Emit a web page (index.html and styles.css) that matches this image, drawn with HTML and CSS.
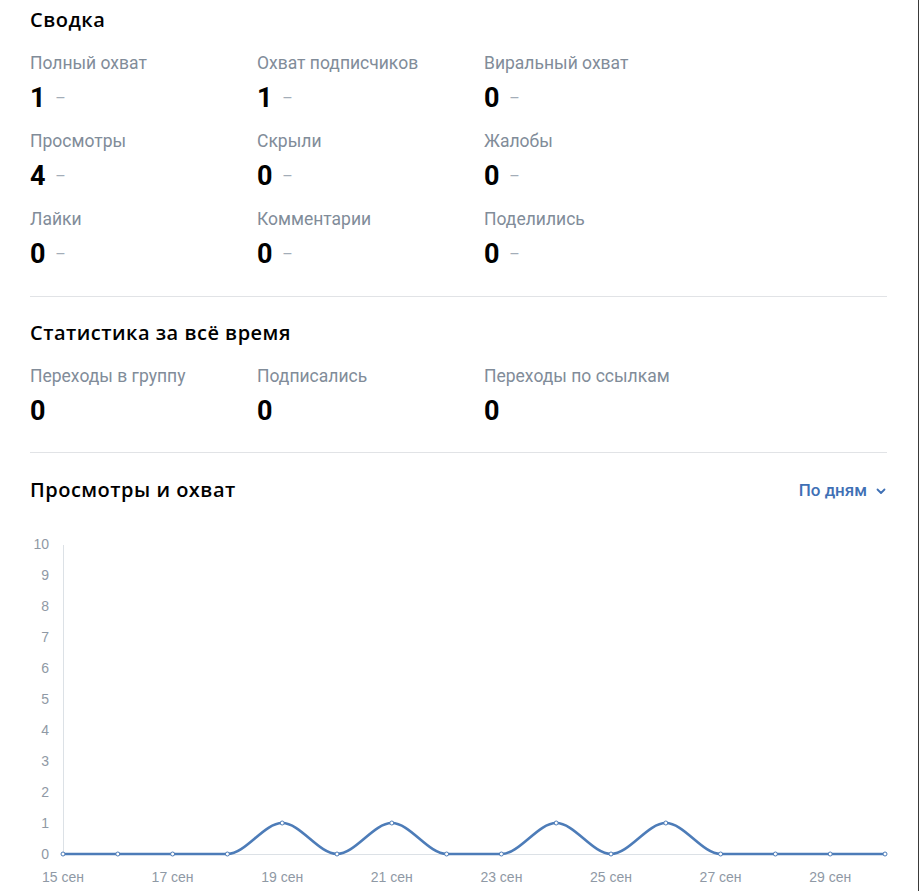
FILE: index.html
```html
<!DOCTYPE html>
<html lang="ru">
<head>
  <meta charset="UTF-8">
  <meta name="viewport" content="width=device-width, initial-scale=1.0">
  <title>Статистика записи</title>
  <link rel="stylesheet" href="styles.css">
</head>
<body>
  <div id="page">
    <div class="section">
      <h2 class="section-title">Сводка</h2>
      <div class="stats">
        <div class="stat">
          <div class="stat-label">Полный охват</div>
          <div class="stat-value">1 <span class="stat-diff">–</span></div>
        </div>
        <div class="stat">
          <div class="stat-label">Охват подписчиков</div>
          <div class="stat-value">1 <span class="stat-diff">–</span></div>
        </div>
        <div class="stat">
          <div class="stat-label">Виральный охват</div>
          <div class="stat-value">0 <span class="stat-diff">–</span></div>
        </div>
        <div class="stat">
          <div class="stat-label">Просмотры</div>
          <div class="stat-value">4 <span class="stat-diff">–</span></div>
        </div>
        <div class="stat">
          <div class="stat-label">Скрыли</div>
          <div class="stat-value">0 <span class="stat-diff">–</span></div>
        </div>
        <div class="stat">
          <div class="stat-label">Жалобы</div>
          <div class="stat-value">0 <span class="stat-diff">–</span></div>
        </div>
        <div class="stat">
          <div class="stat-label">Лайки</div>
          <div class="stat-value">0 <span class="stat-diff">–</span></div>
        </div>
        <div class="stat">
          <div class="stat-label">Комментарии</div>
          <div class="stat-value">0 <span class="stat-diff">–</span></div>
        </div>
        <div class="stat">
          <div class="stat-label">Поделились</div>
          <div class="stat-value">0 <span class="stat-diff">–</span></div>
        </div>
      </div>
    </div>

    <div class="section">
      <h2 class="section-title">Статистика за всё время</h2>
      <div class="stats">
        <div class="stat">
          <div class="stat-label">Переходы в группу</div>
          <div class="stat-value">0</div>
        </div>
        <div class="stat">
          <div class="stat-label">Подписались</div>
          <div class="stat-value">0</div>
        </div>
        <div class="stat">
          <div class="stat-label">Переходы по ссылкам</div>
          <div class="stat-value">0</div>
        </div>
      </div>
    </div>

    <div class="section section-chart">
      <div class="chart-header">
        <h2 class="section-title">Просмотры и охват</h2>
        <a class="period" href="#">По дням
          <svg class="chevron" width="12" height="8" viewBox="0 0 12 8"><path d="M2.5 2.5l3.5 3.5 3.5-3.5" fill="none" stroke="currentColor" stroke-width="1.8" stroke-linecap="round" stroke-linejoin="round"/></svg>
        </a>
      </div>
      <svg class="chart" width="870" height="361" viewBox="0 0 870 361">
        <g class="axis-labels" text-anchor="end">
          <text x="19" y="328">0</text>
          <text x="19" y="297">1</text>
          <text x="19" y="266">2</text>
          <text x="19" y="235">3</text>
          <text x="19" y="204">4</text>
          <text x="19" y="173">5</text>
          <text x="19" y="142">6</text>
          <text x="19" y="111">7</text>
          <text x="19" y="80">8</text>
          <text x="19" y="49">9</text>
          <text x="19" y="18">10</text>
        </g>
        <line x1="33.5" y1="14" x2="33.5" y2="323" stroke="#dce1e6" stroke-width="1"/>
        <line x1="33" y1="323.5" x2="855" y2="323.5" stroke="#dce1e6" stroke-width="1"/>
        <path class="line" d="M33 323 L197.4 323 C215.67 323 233.93 292 252.2 292 C270.47 292 288.73 323 307 323 C325.27 323 343.53 292 361.8 292 C380.07 292 398.33 323 416.6 323 L471.4 323 C489.67 323 507.93 292 526.2 292 C544.47 292 562.73 323 581 323 C599.27 323 617.53 292 635.8 292 C654.07 292 672.33 323 690.6 323 L855 323"/>
        <g class="dots">
          <circle cx="33" cy="323" r="2"/>
          <circle cx="87.8" cy="323" r="2"/>
          <circle cx="142.6" cy="323" r="2"/>
          <circle cx="197.4" cy="323" r="2"/>
          <circle cx="252.2" cy="292" r="2"/>
          <circle cx="307" cy="323" r="2"/>
          <circle cx="361.8" cy="292" r="2"/>
          <circle cx="416.6" cy="323" r="2"/>
          <circle cx="471.4" cy="323" r="2"/>
          <circle cx="526.2" cy="292" r="2"/>
          <circle cx="581" cy="323" r="2"/>
          <circle cx="635.8" cy="292" r="2"/>
          <circle cx="690.6" cy="323" r="2"/>
          <circle cx="745.4" cy="323" r="2"/>
          <circle cx="800.2" cy="323" r="2"/>
          <circle cx="855" cy="323" r="2"/>
        </g>
        <g class="axis-labels" text-anchor="middle">
          <text x="33" y="351">15 сен</text>
          <text x="142.6" y="351">17 сен</text>
          <text x="252.2" y="351">19 сен</text>
          <text x="361.8" y="351">21 сен</text>
          <text x="471.4" y="351">23 сен</text>
          <text x="581" y="351">25 сен</text>
          <text x="690.6" y="351">27 сен</text>
          <text x="800.2" y="351">29 сен</text>
        </g>
      </svg>
    </div>
  </div>
</body>
</html>
```
FILE: styles.css
```css
body {
  margin: 0;
  padding: 0;
  background-color: #fff;
  font-family: Roboto, "Noto Sans", sans-serif;
  color: #000;
}

#page {
  width: 919px;
  min-height: 891px;
  border-right: 1px solid #3a3a3a;
  padding: 0 31px 0 30px;
  box-sizing: border-box;
  overflow: hidden;
}

.section {
  padding: 8px 0 21px;
  border-bottom: 1px solid #e1e3e6;
}

.section + .section {
  padding-top: 24px;
}

.section-chart {
  border-bottom: none;
  padding-bottom: 0;
}

.section + .section-chart {
  padding-top: 25px;
}

.section-title {
  margin: 0 0 20px;
  font-family: "Open Sans", Roboto, sans-serif;
  font-size: 20px;
  font-weight: 600;
  letter-spacing: 0.5px;
  line-height: 24px;
}

.stats {
  display: grid;
  grid-template-columns: repeat(3, 227px);
  row-gap: 11px;
}

.stat-label {
  color: #818c99;
  font-size: 17.5px;
  line-height: 22px;
}

.stat-value {
  margin-top: 4px;
  font-size: 27px;
  font-weight: 700;
  line-height: 40px;
}

.stat-diff {
  margin-left: 3px;
  color: #a3adb8;
  font-size: 16px;
  font-weight: 400;
  vertical-align: 3px;
}

.chart-header {
  display: flex;
  justify-content: space-between;
  align-items: center;
}

.chart-header .section-title {
  margin: 0;
}

.period {
  display: flex;
  align-items: center;
  gap: 8px;
  color: #3f70b5;
  font-size: 17px;
  font-weight: 500;
  text-decoration: none;
}

.chevron {
  margin-top: 1px;
}

.chart {
  display: block;
  margin-top: 29px;
}

.axis-labels {
  fill: #8f99a5;
  font-family: "Liberation Sans", Arial, sans-serif;
  font-size: 14px;
}

.line {
  fill: none;
  stroke: #4d7cb8;
  stroke-width: 2.6;
}

.dots circle {
  fill: #fff;
  stroke: #4d7cb8;
  stroke-width: 1;
}
```
